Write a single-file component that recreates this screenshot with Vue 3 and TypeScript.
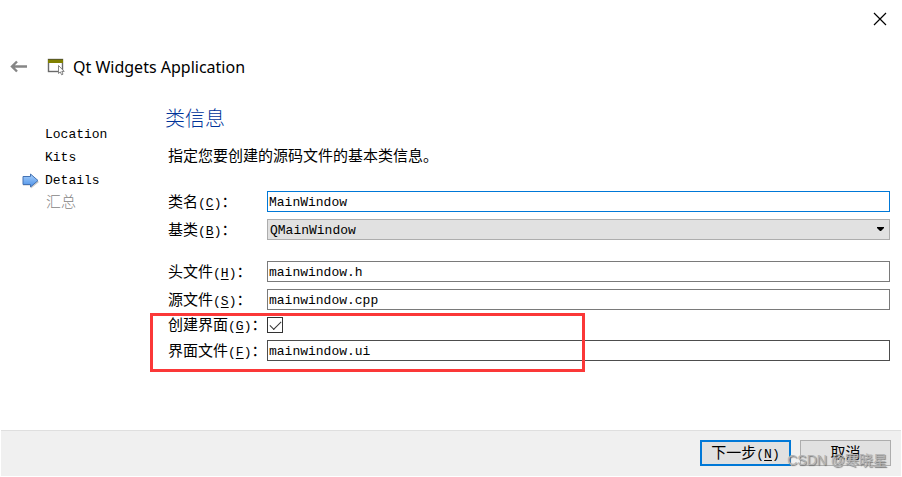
<script setup lang="ts">
import { ref } from 'vue'

interface Step {
  name: string
  state: 'done' | 'current' | 'pending'
}

const steps: Step[] = [
  { name: 'Location', state: 'done' },
  { name: 'Kits', state: 'done' },
  { name: 'Details', state: 'current' },
  { name: '汇总', state: 'pending' },
]

const className = ref('MainWindow')
const baseClass = ref('QMainWindow')
const headerFile = ref('mainwindow.h')
const sourceFile = ref('mainwindow.cpp')
const createForm = ref(true)
const formFile = ref('mainwindow.ui')
</script>

<template>
  <div class="wizard">
    <div class="titlebar">
      <button class="close" type="button" aria-label="关闭">
        <svg width="14" height="14" viewBox="0 0 14 14">
          <path d="M1 1L13 13M13 1L1 13" stroke="#000" stroke-width="1.2" fill="none" />
        </svg>
      </button>
    </div>

    <header class="header">
      <button class="back" type="button" aria-label="返回">
        <svg width="18" height="14" viewBox="0 0 18 14">
          <path d="M17 6.500H2M7 1.500L2 6.500L7 11.500" stroke="#868686" stroke-width="2.400" fill="none" />
        </svg>
      </button>
      <svg class="app-icon" width="18" height="18" viewBox="0 0 18 18">
        <rect x="1.500" y="1.500" width="14" height="12" fill="#fff" stroke="#6a6a6a" stroke-width="1.400" />
        <rect x="1" y="1" width="15" height="4" fill="#808000" />
        <path d="M1 1.500H16" stroke="#5c5c22" stroke-width="1" />
        <path d="M11.500 7.500V15.500L13.300 13.900L14.600 16.800L16 16.200L14.800 13.400H17.200Z" fill="#fff" stroke="#777" stroke-width="0.900" />
      </svg>
      <h1 class="app-title">Qt Widgets Application</h1>
    </header>

    <div class="body">
      <ol class="steps">
        <li v-for="step in steps" :key="step.name" class="step" :class="step.state">
          <svg v-if="step.state === 'current'" class="marker" width="18" height="16" viewBox="0 0 18 16">
            <defs>
              <linearGradient id="marker-fill" x1="0" y1="0" x2="0" y2="1">
                <stop offset="0" stop-color="#a9d0fb" />
                <stop offset="1" stop-color="#4a90e8" />
              </linearGradient>
            </defs>
            <path d="M1 5H9V2L17 9L9 15.500V12.500H1Z" fill="#c8c8c8" />
            <path d="M1 3.500H8.500V1L16 7.500L8.500 14V11.500H1Z" fill="url(#marker-fill)" stroke="#4473b4" stroke-width="1" />
          </svg>
          <span>{{ step.name }}</span>
        </li>
      </ol>

      <main class="page">
        <h2 class="heading">类信息</h2>
        <p class="intro">指定您要创建的源码文件的基本类信息。</p>

        <form class="form" @submit.prevent>
          <div class="row">
            <label for="class-name">类名<span class="key">(<u>C</u>)</span>：</label>
            <input id="class-name" v-model="className" class="field focused" type="text" />
          </div>
          <div class="row">
            <label for="base-class">基类<span class="key">(<u>B</u>)</span>：</label>
            <div class="combo">
              <select id="base-class" v-model="baseClass" class="field">
                <option>QMainWindow</option>
                <option>QWidget</option>
                <option>QDialog</option>
              </select>
              <svg class="chevron" width="7" height="4" viewBox="0 0 7 4">
                <path d="M0 0H7V1L4 4H3L0 1Z" fill="#000" />
              </svg>
            </div>
          </div>
          <div class="row files">
            <label for="header-file">头文件<span class="key">(<u>H</u>)</span>：</label>
            <input id="header-file" v-model="headerFile" class="field" type="text" />
          </div>
          <div class="row">
            <label for="source-file">源文件<span class="key">(<u>S</u>)</span>：</label>
            <input id="source-file" v-model="sourceFile" class="field" type="text" />
          </div>
          <div class="highlighted">
            <div class="row">
              <label for="create-form">创建界面<span class="key">(<u>G</u>)</span>：</label>
              <input id="create-form" v-model="createForm" class="check" type="checkbox" />
            </div>
            <div class="row">
              <label for="form-file">界面文件<span class="key">(<u>F</u>)</span>：</label>
              <input id="form-file" v-model="formFile" class="field dark" type="text" />
            </div>
          </div>
        </form>
      </main>
    </div>

    <footer class="footer">
      <button class="button primary" type="button">下一步<span class="key">(<u>N</u>)</span></button>
      <button class="button" type="button">取消</button>
      <span class="watermark">CSDN @寒晓星</span>
    </footer>
  </div>
</template>

<style>
body {
  background: #fff;
}
</style>

<style scoped>
.wizard {
  color: #000;
  font-family: "Liberation Mono", "Noto Sans CJK SC", monospace;
  font-size: 15px;
  line-height: 20px;
}

h1, h2, p, ol {
  margin: 0;
  padding: 0;
  font-weight: 400;
}

button, input, select {
  box-sizing: border-box;
  margin: 0;
  border-radius: 0;
  color: inherit;
  font-family: inherit;
}

.titlebar {
  display: flex;
  justify-content: flex-end;
  padding: 12px 15px 0 0;
}

.close, .back {
  display: flex;
  padding: 0;
  border: 0;
  background: none;
}

.header {
  display: flex;
  align-items: center;
  height: 24px;
  padding: 29px 10px 0;
}

.app-icon {
  margin-left: 19px;
}

.app-title {
  margin-left: 8px;
  font-family: "Noto Sans", "Open Sans", sans-serif;
  font-size: 16px;
}

.body {
  display: flex;
  padding: 30px 12px 0 20px;
}

.steps {
  flex: none;
  width: 145px;
  padding-top: 14px;
  list-style: none;
  font-size: 13px;
}

.step {
  display: flex;
  align-items: center;
  height: 23px;
  padding-left: 25px;
}

.step.current {
  gap: 5px;
  padding-left: 2px;
}

.step.pending {
  padding-left: 26px;
  color: #858585;
  font-size: 15px;
  font-weight: 300;
}

.page {
  flex: 1;
  min-width: 0;
}

.heading {
  color: #003399;
  font-size: 20px;
  font-weight: 300;
  line-height: 24px;
}

.intro {
  padding: 15px 3px 0;
}

.form {
  display: flex;
  flex-direction: column;
  gap: 7px;
  padding: 23px 0 0 3px;
}

.row {
  display: grid;
  grid-template-columns: 99px 1fr;
  align-items: center;
}

.row label {
  height: 16px;
  line-height: 20px;
  white-space: nowrap;
}

.files {
  margin-top: 14px;
}

.key {
  font-size: 13px;
}

u {
  text-underline-offset: 2px;
}

.field {
  display: block;
  width: 100%;
  height: 21px;
  padding: 1px 1px 0;
  border: 1px solid #7a7a7a;
  outline: 0;
  background: #fff;
  font-size: 13px;
}

.field.focused {
  border-color: #0078d7;
}

.field.dark {
  border-color: #4d4d4d;
}

.combo {
  position: relative;
}

.combo .field {
  padding-left: 2px;
  appearance: none;
  border-color: #adadad;
  background: #e1e1e1;
}

.chevron {
  position: absolute;
  top: 8px;
  right: 6px;
  pointer-events: none;
}

.highlighted {
  position: relative;
  display: flex;
  flex-direction: column;
  gap: 7px;
}

.highlighted::after {
  content: "";
  position: absolute;
  top: -4px;
  left: -18px;
  box-sizing: border-box;
  width: 435px;
  height: 59px;
  border: 3px solid #fb3838;
  pointer-events: none;
}

.check {
  appearance: none;
  display: grid;
  place-items: center;
  width: 16px;
  height: 16px;
  border: 1px solid #333;
  background: #fff;
}

.check:checked::before {
  content: "";
  width: 11px;
  height: 6px;
  box-sizing: border-box;
  margin-bottom: 3px;
  border: solid #333;
  border-width: 0 0 1px 1px;
  rotate: -45deg;
}

.footer {
  position: relative;
  display: flex;
  justify-content: flex-end;
  gap: 9px;
  margin: 69px 1px 0;
  padding: 9px 10px 10px;
  border-top: 1px solid #dfdfdf;
  background: #f0f0f0;
}

.button {
  width: 91px;
  height: 26px;
  padding: 3px 0 0;
  border: 1px solid #adadad;
  background: #e1e1e1;
  font-size: 15px;
  line-height: 20px;
}

.button.primary {
  border: 2px solid #0078d7;
}

.watermark {
  position: absolute;
  right: 14px;
  bottom: 6px;
  color: #b4b4b4;
  font-family: "Liberation Sans", "Noto Sans CJK SC", sans-serif;
  font-size: 14px;
  text-shadow: 1px 1px 1px #777;
  pointer-events: none;
}
</style>
